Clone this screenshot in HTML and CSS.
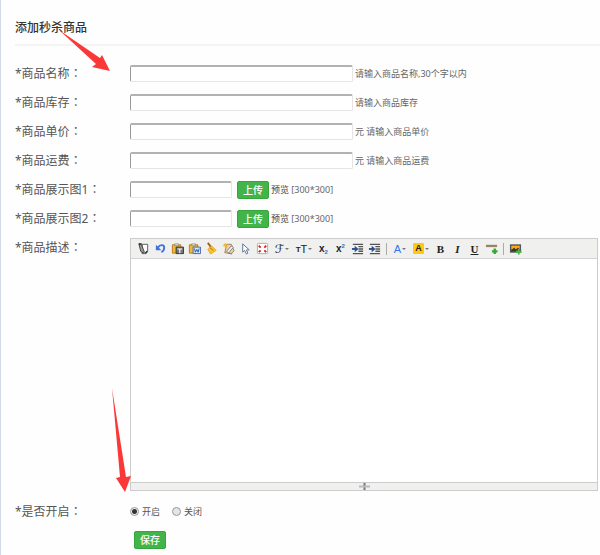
FILE: index.html
```html
<!DOCTYPE html>
<html lang="zh-CN">
<head>
<meta charset="utf-8">
<title>添加秒杀商品</title>
<link rel="stylesheet" href="styles.css">
</head>
<body>
<main class="page">
  <h1 class="title">添加秒杀商品</h1>
  <form class="form">
    <div class="row">
      <label class="label" for="name">*商品名称<span class="colon" lang="zh-TW">：</span></label>
      <input class="field" id="name" type="text">
      <span class="hint">请输入商品名称,30个字以内</span>
    </div>
    <div class="row">
      <label class="label" for="stock">*商品库存<span class="colon" lang="zh-TW">：</span></label>
      <input class="field" id="stock" type="text">
      <span class="hint">请输入商品库存</span>
    </div>
    <div class="row">
      <label class="label" for="price">*商品单价<span class="colon" lang="zh-TW">：</span></label>
      <input class="field" id="price" type="text">
      <span class="hint">元 请输入商品单价</span>
    </div>
    <div class="row">
      <label class="label" for="freight">*商品运费<span class="colon" lang="zh-TW">：</span></label>
      <input class="field" id="freight" type="text">
      <span class="hint">元 请输入商品运费</span>
    </div>
    <div class="row">
      <label class="label" for="image1">*商品展示图1<span class="colon" lang="zh-TW">：</span></label>
      <input class="field field-short" id="image1" type="text">
      <button class="button upload" type="button">上传</button>
      <span class="hint"><a class="preview" href="#">预览</a> [300*300]</span>
    </div>
    <div class="row">
      <label class="label" for="image2">*商品展示图2<span class="colon" lang="zh-TW">：</span></label>
      <input class="field field-short" id="image2" type="text">
      <button class="button upload" type="button">上传</button>
      <span class="hint"><a class="preview" href="#">预览</a> [300*300]</span>
    </div>
    <div class="row row-editor">
      <label class="label" for="description">*商品描述<span class="colon" lang="zh-TW">：</span></label>
      <div class="editor">
        <div class="toolbar">
          <button class="tool" type="button" aria-label="源码"><svg viewBox="0 0 14 14"><path d="M5.500 2.500h6v8l-2 2h-4z" fill="#fff" stroke="#555"/><path d="M2 2l3 1 3 8-1 1-3-2z" fill="#999" stroke="#222" stroke-width=".8"/><path d="M2 2h3M9 12l2-2" stroke="#222" stroke-width="1.500"/></svg></button>
          <button class="tool" type="button" aria-label="撤销"><svg viewBox="0 0 14 14"><path d="M4 6c3-4 7-3 7 0 0 2-1 4-3 5" fill="none" stroke="#3d73dc" stroke-width="2"/><path d="M2 3v6h6z" fill="#3d73dc"/></svg></button>
          <button class="tool" type="button" aria-label="粘贴文本"><svg viewBox="0 0 14 14"><path d="M1.500 3h9v9h-9z" fill="#efb83e" stroke="#b77a14"/><path d="M4 2h4v2H4z" fill="#eee" stroke="#777" stroke-width=".7"/><path d="M5.500 5.500h8v7h-8z" fill="#777" stroke="#333"/><path d="M7 7.500h5M9.500 7v5" stroke="#fff" stroke-width="1.200"/></svg></button>
          <button class="tool" type="button" aria-label="从 Word 粘贴"><svg viewBox="0 0 14 14"><path d="M1.500 3h9v9h-9z" fill="#efb83e" stroke="#b77a14"/><path d="M4 2h4v2H4z" fill="#eee" stroke="#777" stroke-width=".7"/><path d="M5.500 5.500h8v7h-8z" fill="#dce9ff" stroke="#3c69ad"/><path d="M7 7l1 4 1.500-3 1.500 3 1-4" fill="none" stroke="#2454a5"/></svg></button>
          <button class="tool" type="button" aria-label="清除格式"><svg viewBox="0 0 14 14"><path d="M3 1l4 5" stroke="#a45d15" stroke-width="2"/><path d="M3 8l4-4 5 5-6 4z" fill="#f6c52f" stroke="#d69b12" stroke-width=".7"/><path d="M5 6l4 3" stroke="#d45a22"/></svg></button>
          <button class="tool" type="button" aria-label="自动排版"><svg viewBox="0 0 14 14"><path d="M5 2.500h5l3 7-3 3-7-1z" fill="#f0d3a0" stroke="#9a8058"/><path d="M5 10l5-6 2 2-5 6z" fill="#eee" stroke="#666" stroke-width=".8"/><path d="M3.500 1v5M1 3.500h5M2 2l3 3M5 2L2 5" stroke="#f4b326"/><path d="M7 12l4 1" stroke="#598bc7" stroke-width="1.200"/></svg></button>
          <button class="tool" type="button" aria-label="全选"><svg viewBox="0 0 14 14"><path d="M4 2v9l2-2 2 4 1.500-1L8 8.500h3z" fill="#fff" stroke="#5b6f92"/></svg></button>
          <button class="tool" type="button" aria-label="全屏"><svg viewBox="0 0 14 14"><rect x="1.500" y="1.500" width="11" height="11" rx="1" fill="#fff" stroke="#aaa"/><path d="M3 4l2 2M11 4L9 6M3 11l2-2M11 11L9 9" stroke="#d62222" stroke-width="2"/></svg></button>
          <button class="tool tool-menu script" type="button" aria-label="字体">ℱ</button>
          <button class="tool tool-menu" type="button" aria-label="字号"><small>T</small>T</button>
          <button class="tool bold" type="button" aria-label="下标">x<sub>2</sub></button>
          <button class="tool bold" type="button" aria-label="上标">x<sup>2</sup></button>
          <button class="tool" type="button" aria-label="增加缩进"><svg viewBox="0 0 14 14"><path d="M2 2.500h11M8 5h5M8 7.500h5M8 10h5M2 12.500h11" stroke="#555" stroke-width="1.500"/><path d="M1 7.500h4" stroke="#234f91" stroke-width="2"/><path d="M4 4l4 3.500L4 11z" fill="#234f91"/></svg></button>
          <button class="tool" type="button" aria-label="减少缩进"><svg viewBox="0 0 14 14"><path d="M2 2.500h11M8 5h5M8 7.500h5M8 10h5M2 12.500h11" stroke="#555" stroke-width="1.500"/><path d="M1 7.500h4" stroke="#234f91" stroke-width="2"/><path d="M4 4l4 3.500L4 11z" fill="#234f91"/></svg></button>
          <span class="separator"></span>
          <button class="tool tool-menu tool-color" type="button" aria-label="文字颜色">A</button>
          <button class="tool tool-menu" type="button" aria-label="背景颜色"><span class="marker">A</span></button>
          <button class="tool serif" type="button" aria-label="加粗">B</button>
          <button class="tool serif italic" type="button" aria-label="斜体">I</button>
          <button class="tool serif underline" type="button" aria-label="下划线">U</button>
          <button class="tool" type="button" aria-label="插入横线"><svg viewBox="0 0 14 14"><path d="M1 3h12v2.500H1z" fill="#998367"/><path d="M10.500 7v6M7.500 10h6" stroke="#35a535" stroke-width="2.500"/></svg></button>
          <span class="separator"></span>
          <button class="tool" type="button" aria-label="插入图片"><svg viewBox="0 0 14 14"><rect x="1" y="2.500" width="12" height="9" fill="#555"/><path d="M2.500 4h9v4h-9z" fill="#ffad16"/><path d="M2.500 9l3-3 2 2 2-2 2 2v2h-9z" fill="#343b31"/><path d="M10.500 7.500v6M7.500 10.500h6" stroke="#42b942" stroke-width="2"/></svg></button>
        </div>
        <textarea class="content" id="description"></textarea>
        <div class="statusbar"><svg class="grip" viewBox="0 0 11 7"><path d="M5.500 0v7" stroke="#777" stroke-width="2"/><path d="M0 3.500h11" stroke="#bbb" stroke-width="2"/></svg></div>
      </div>
    </div>
    <div class="row row-status" role="radiogroup" aria-labelledby="status">
      <span class="label" id="status">*是否开启<span class="colon" lang="zh-TW">：</span></span>
      <label class="choice"><input class="radio" type="radio" name="enabled" checked>开启</label>
      <label class="choice"><input class="radio" type="radio" name="enabled">关闭</label>
    </div>
    <div class="actions"><button class="button" type="submit">保存</button></div>
  </form>
  <svg class="arrow arrow-name" viewBox="0 0 52 43" aria-hidden="true"><path d="M0 0L41 28 43 25 51 41 33 37 37 34z"/></svg>
  <svg class="arrow arrow-status" viewBox="0 0 20 105" aria-hidden="true"><path d="M0 0L14 89 19 88 13 104 4 90 8 89z"/></svg>
</main>
</body>
</html>
```
FILE: styles.css
```css
* {
  box-sizing: border-box;
}

body {
  margin: 0;
  background: #fefefe;
  color: #555;
  font-family: "Noto Sans", "Noto Sans CJK SC", sans-serif;
  font-size: 9px;
}

.page {
  position: relative;
  min-height: 100vh;
  padding: 18px 0 4px 14px;
  border-left: 1px solid #d3d9e8;
}

.title {
  height: 28px;
  margin: 0;
  border-bottom: 2px solid #f4f4f4;
  color: #333;
  font-size: 12px;
  font-weight: 500;
  line-height: 20px;
}

.form {
  padding-top: 13px;
}

.row {
  display: flex;
  align-items: center;
  height: 29px;
}

.label {
  flex: 0 0 115px;
  font-size: 12px;
  line-height: 18px;
}

.colon {
  font-family: "Noto Sans CJK TC", sans-serif;
}

.field {
  width: 223px;
  height: 17px;
  padding: 0 3px;
  border: 1px solid #e5e5e5;
  border-top: 2px solid #b2b2b2;
  border-left-color: #999;
  border-radius: 2px;
  background: #fff;
  font: inherit;
}

.field-short {
  width: 102px;
}

.hint {
  margin-left: 2px;
  color: #666;
  line-height: 16px;
  white-space: nowrap;
}

.preview {
  color: #444;
  text-decoration: none;
}

.button {
  width: 32px;
  height: 18px;
  padding: 0;
  border: 1px solid #36a63c;
  border-radius: 2px;
  background: #43b449;
  color: #fff;
  font: 500 10px/16px "Noto Sans", "Noto Sans CJK SC", sans-serif;
}

.upload {
  margin-left: 5px;
}

.row-editor {
  align-items: flex-start;
  height: auto;
  padding: 5px 2px 0 0;
}

.editor {
  flex: 1;
  min-width: 0;
  border: 1px solid #ccc;
  background: #fff;
}

.toolbar {
  display: flex;
  align-items: center;
  height: 20px;
  padding-left: 4px;
  border-bottom: 1px solid #d4d4d4;
  background: #f0f0ee;
}

.tool {
  display: flex;
  flex: 0 0 17px;
  align-items: center;
  justify-content: center;
  height: 18px;
  padding: 0;
  border: 0;
  background: none;
  color: #222;
  font: 11px/14px "Liberation Sans", sans-serif;
}

.tool svg {
  width: 13px;
  height: 13px;
}

.tool small {
  padding-top: 2px;
  font-size: 8px;
  font-weight: bold;
}

.tool sub,
.tool sup {
  color: #3c6ebc;
  font-size: 6px;
  line-height: 6px;
}

.tool sub {
  padding-top: 6px;
}

.tool sup {
  padding-bottom: 6px;
}

.tool-menu {
  flex-basis: 22px;
}

.tool-menu::after {
  content: "";
  margin-left: 1px;
  border: 2px solid transparent;
  border-top-color: #777;
  border-bottom: 0;
}

.tool-color {
  flex-basis: 20px;
  color: #3377ee;
}

.script {
  font-family: "DejaVu Sans", sans-serif;
  font-size: 12px;
}

.bold {
  font-size: 10px;
  font-weight: bold;
}

.marker {
  width: 11px;
  height: 11px;
  border-radius: 1px;
  background: #ffc90e;
  font-size: 9px;
  font-weight: bold;
  line-height: 11px;
}

.serif {
  font-family: "Liberation Serif", serif;
  font-weight: bold;
}

.italic {
  font-style: italic;
}

.underline {
  text-decoration: underline;
}

.separator {
  flex: 0 0 1px;
  height: 12px;
  margin: 0 3px;
  background: #aaa;
}

.content {
  display: block;
  width: 100%;
  height: 223px;
  padding: 4px;
  border: 0;
  background: #fff;
  resize: none;
}

.statusbar {
  display: flex;
  align-items: center;
  justify-content: center;
  height: 8px;
  border-top: 1px solid #ccc;
  background: #f0f0ee;
}

.grip {
  width: 11px;
  height: 7px;
}

.row-status {
  height: 40px;
}

.choice {
  display: flex;
  align-items: center;
  margin-right: 12px;
}

.radio {
  width: 9px;
  height: 9px;
  margin: 0 3px 0 0;
  border: 1px solid #999;
  border-radius: 50%;
  appearance: none;
  background: #e5e5e5;
}

.radio:checked {
  background: radial-gradient(circle, #333 2px, #eee 3px);
}

.actions {
  padding-left: 119px;
}

.arrow {
  position: absolute;
  fill: #fb3838;
  pointer-events: none;
}

.arrow-name {
  top: 30px;
  left: 58px;
  width: 52px;
  height: 43px;
}

.arrow-status {
  top: 388px;
  left: 111px;
  width: 20px;
  height: 105px;
}
```
